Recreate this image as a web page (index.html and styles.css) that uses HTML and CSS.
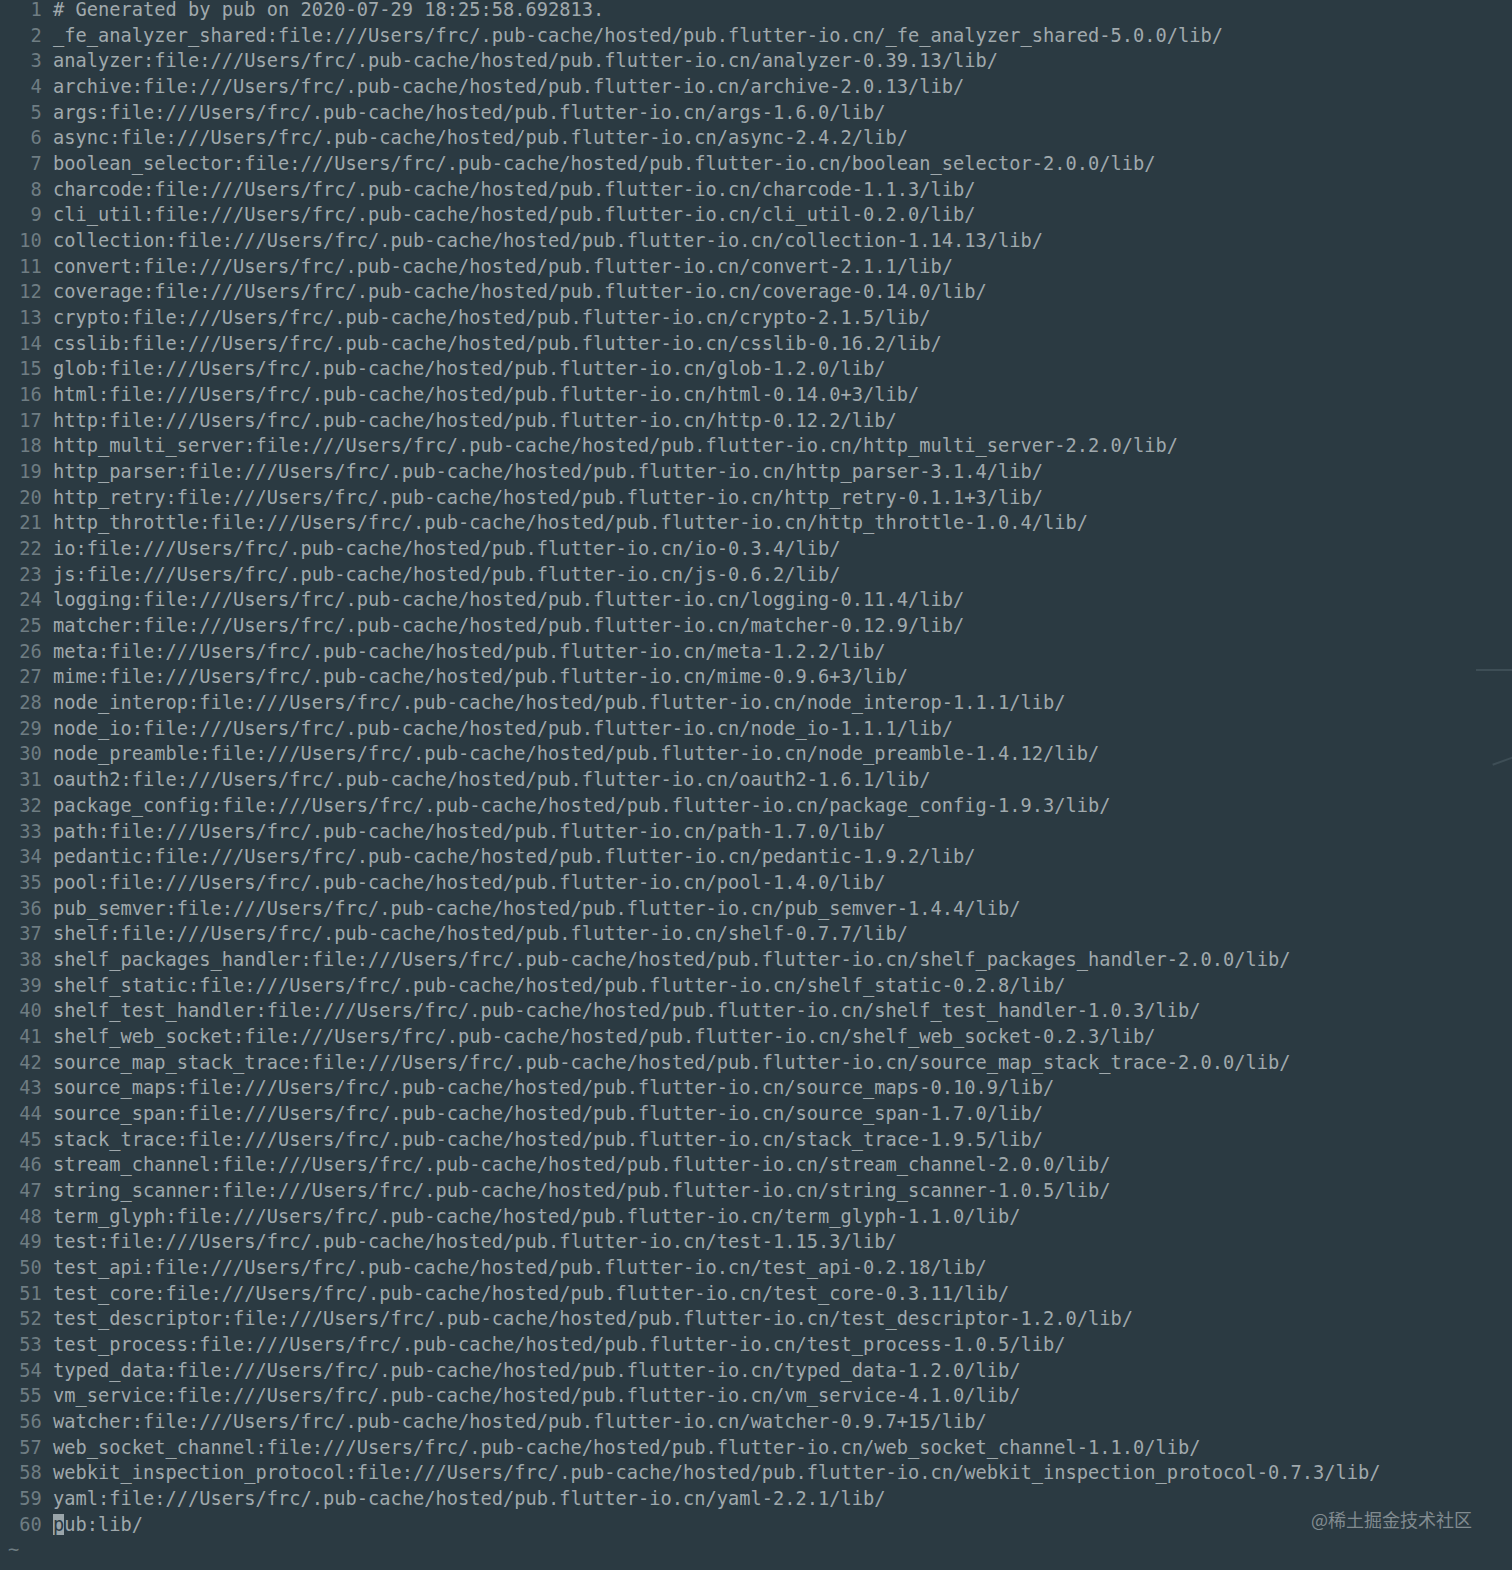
FILE: index.html
```html
<!DOCTYPE html>
<html>
<head>
<meta charset="utf-8">
<link rel="stylesheet" href="styles.css">
</head>
<body>
<div class="term">
<div class="l"><span class="n">1</span># Generated by pub on 2020-07-29 18:25:58.692813.</div>
<div class="l"><span class="n">2</span>_fe_analyzer_shared:file:///Users/frc/.pub-cache/hosted/pub.flutter-io.cn/_fe_analyzer_shared-5.0.0/lib/</div>
<div class="l"><span class="n">3</span>analyzer:file:///Users/frc/.pub-cache/hosted/pub.flutter-io.cn/analyzer-0.39.13/lib/</div>
<div class="l"><span class="n">4</span>archive:file:///Users/frc/.pub-cache/hosted/pub.flutter-io.cn/archive-2.0.13/lib/</div>
<div class="l"><span class="n">5</span>args:file:///Users/frc/.pub-cache/hosted/pub.flutter-io.cn/args-1.6.0/lib/</div>
<div class="l"><span class="n">6</span>async:file:///Users/frc/.pub-cache/hosted/pub.flutter-io.cn/async-2.4.2/lib/</div>
<div class="l"><span class="n">7</span>boolean_selector:file:///Users/frc/.pub-cache/hosted/pub.flutter-io.cn/boolean_selector-2.0.0/lib/</div>
<div class="l"><span class="n">8</span>charcode:file:///Users/frc/.pub-cache/hosted/pub.flutter-io.cn/charcode-1.1.3/lib/</div>
<div class="l"><span class="n">9</span>cli_util:file:///Users/frc/.pub-cache/hosted/pub.flutter-io.cn/cli_util-0.2.0/lib/</div>
<div class="l"><span class="n">10</span>collection:file:///Users/frc/.pub-cache/hosted/pub.flutter-io.cn/collection-1.14.13/lib/</div>
<div class="l"><span class="n">11</span>convert:file:///Users/frc/.pub-cache/hosted/pub.flutter-io.cn/convert-2.1.1/lib/</div>
<div class="l"><span class="n">12</span>coverage:file:///Users/frc/.pub-cache/hosted/pub.flutter-io.cn/coverage-0.14.0/lib/</div>
<div class="l"><span class="n">13</span>crypto:file:///Users/frc/.pub-cache/hosted/pub.flutter-io.cn/crypto-2.1.5/lib/</div>
<div class="l"><span class="n">14</span>csslib:file:///Users/frc/.pub-cache/hosted/pub.flutter-io.cn/csslib-0.16.2/lib/</div>
<div class="l"><span class="n">15</span>glob:file:///Users/frc/.pub-cache/hosted/pub.flutter-io.cn/glob-1.2.0/lib/</div>
<div class="l"><span class="n">16</span>html:file:///Users/frc/.pub-cache/hosted/pub.flutter-io.cn/html-0.14.0+3/lib/</div>
<div class="l"><span class="n">17</span>http:file:///Users/frc/.pub-cache/hosted/pub.flutter-io.cn/http-0.12.2/lib/</div>
<div class="l"><span class="n">18</span>http_multi_server:file:///Users/frc/.pub-cache/hosted/pub.flutter-io.cn/http_multi_server-2.2.0/lib/</div>
<div class="l"><span class="n">19</span>http_parser:file:///Users/frc/.pub-cache/hosted/pub.flutter-io.cn/http_parser-3.1.4/lib/</div>
<div class="l"><span class="n">20</span>http_retry:file:///Users/frc/.pub-cache/hosted/pub.flutter-io.cn/http_retry-0.1.1+3/lib/</div>
<div class="l"><span class="n">21</span>http_throttle:file:///Users/frc/.pub-cache/hosted/pub.flutter-io.cn/http_throttle-1.0.4/lib/</div>
<div class="l"><span class="n">22</span>io:file:///Users/frc/.pub-cache/hosted/pub.flutter-io.cn/io-0.3.4/lib/</div>
<div class="l"><span class="n">23</span>js:file:///Users/frc/.pub-cache/hosted/pub.flutter-io.cn/js-0.6.2/lib/</div>
<div class="l"><span class="n">24</span>logging:file:///Users/frc/.pub-cache/hosted/pub.flutter-io.cn/logging-0.11.4/lib/</div>
<div class="l"><span class="n">25</span>matcher:file:///Users/frc/.pub-cache/hosted/pub.flutter-io.cn/matcher-0.12.9/lib/</div>
<div class="l"><span class="n">26</span>meta:file:///Users/frc/.pub-cache/hosted/pub.flutter-io.cn/meta-1.2.2/lib/</div>
<div class="l"><span class="n">27</span>mime:file:///Users/frc/.pub-cache/hosted/pub.flutter-io.cn/mime-0.9.6+3/lib/</div>
<div class="l"><span class="n">28</span>node_interop:file:///Users/frc/.pub-cache/hosted/pub.flutter-io.cn/node_interop-1.1.1/lib/</div>
<div class="l"><span class="n">29</span>node_io:file:///Users/frc/.pub-cache/hosted/pub.flutter-io.cn/node_io-1.1.1/lib/</div>
<div class="l"><span class="n">30</span>node_preamble:file:///Users/frc/.pub-cache/hosted/pub.flutter-io.cn/node_preamble-1.4.12/lib/</div>
<div class="l"><span class="n">31</span>oauth2:file:///Users/frc/.pub-cache/hosted/pub.flutter-io.cn/oauth2-1.6.1/lib/</div>
<div class="l"><span class="n">32</span>package_config:file:///Users/frc/.pub-cache/hosted/pub.flutter-io.cn/package_config-1.9.3/lib/</div>
<div class="l"><span class="n">33</span>path:file:///Users/frc/.pub-cache/hosted/pub.flutter-io.cn/path-1.7.0/lib/</div>
<div class="l"><span class="n">34</span>pedantic:file:///Users/frc/.pub-cache/hosted/pub.flutter-io.cn/pedantic-1.9.2/lib/</div>
<div class="l"><span class="n">35</span>pool:file:///Users/frc/.pub-cache/hosted/pub.flutter-io.cn/pool-1.4.0/lib/</div>
<div class="l"><span class="n">36</span>pub_semver:file:///Users/frc/.pub-cache/hosted/pub.flutter-io.cn/pub_semver-1.4.4/lib/</div>
<div class="l"><span class="n">37</span>shelf:file:///Users/frc/.pub-cache/hosted/pub.flutter-io.cn/shelf-0.7.7/lib/</div>
<div class="l"><span class="n">38</span>shelf_packages_handler:file:///Users/frc/.pub-cache/hosted/pub.flutter-io.cn/shelf_packages_handler-2.0.0/lib/</div>
<div class="l"><span class="n">39</span>shelf_static:file:///Users/frc/.pub-cache/hosted/pub.flutter-io.cn/shelf_static-0.2.8/lib/</div>
<div class="l"><span class="n">40</span>shelf_test_handler:file:///Users/frc/.pub-cache/hosted/pub.flutter-io.cn/shelf_test_handler-1.0.3/lib/</div>
<div class="l"><span class="n">41</span>shelf_web_socket:file:///Users/frc/.pub-cache/hosted/pub.flutter-io.cn/shelf_web_socket-0.2.3/lib/</div>
<div class="l"><span class="n">42</span>source_map_stack_trace:file:///Users/frc/.pub-cache/hosted/pub.flutter-io.cn/source_map_stack_trace-2.0.0/lib/</div>
<div class="l"><span class="n">43</span>source_maps:file:///Users/frc/.pub-cache/hosted/pub.flutter-io.cn/source_maps-0.10.9/lib/</div>
<div class="l"><span class="n">44</span>source_span:file:///Users/frc/.pub-cache/hosted/pub.flutter-io.cn/source_span-1.7.0/lib/</div>
<div class="l"><span class="n">45</span>stack_trace:file:///Users/frc/.pub-cache/hosted/pub.flutter-io.cn/stack_trace-1.9.5/lib/</div>
<div class="l"><span class="n">46</span>stream_channel:file:///Users/frc/.pub-cache/hosted/pub.flutter-io.cn/stream_channel-2.0.0/lib/</div>
<div class="l"><span class="n">47</span>string_scanner:file:///Users/frc/.pub-cache/hosted/pub.flutter-io.cn/string_scanner-1.0.5/lib/</div>
<div class="l"><span class="n">48</span>term_glyph:file:///Users/frc/.pub-cache/hosted/pub.flutter-io.cn/term_glyph-1.1.0/lib/</div>
<div class="l"><span class="n">49</span>test:file:///Users/frc/.pub-cache/hosted/pub.flutter-io.cn/test-1.15.3/lib/</div>
<div class="l"><span class="n">50</span>test_api:file:///Users/frc/.pub-cache/hosted/pub.flutter-io.cn/test_api-0.2.18/lib/</div>
<div class="l"><span class="n">51</span>test_core:file:///Users/frc/.pub-cache/hosted/pub.flutter-io.cn/test_core-0.3.11/lib/</div>
<div class="l"><span class="n">52</span>test_descriptor:file:///Users/frc/.pub-cache/hosted/pub.flutter-io.cn/test_descriptor-1.2.0/lib/</div>
<div class="l"><span class="n">53</span>test_process:file:///Users/frc/.pub-cache/hosted/pub.flutter-io.cn/test_process-1.0.5/lib/</div>
<div class="l"><span class="n">54</span>typed_data:file:///Users/frc/.pub-cache/hosted/pub.flutter-io.cn/typed_data-1.2.0/lib/</div>
<div class="l"><span class="n">55</span>vm_service:file:///Users/frc/.pub-cache/hosted/pub.flutter-io.cn/vm_service-4.1.0/lib/</div>
<div class="l"><span class="n">56</span>watcher:file:///Users/frc/.pub-cache/hosted/pub.flutter-io.cn/watcher-0.9.7+15/lib/</div>
<div class="l"><span class="n">57</span>web_socket_channel:file:///Users/frc/.pub-cache/hosted/pub.flutter-io.cn/web_socket_channel-1.1.0/lib/</div>
<div class="l"><span class="n">58</span>webkit_inspection_protocol:file:///Users/frc/.pub-cache/hosted/pub.flutter-io.cn/webkit_inspection_protocol-0.7.3/lib/</div>
<div class="l"><span class="n">59</span>yaml:file:///Users/frc/.pub-cache/hosted/pub.flutter-io.cn/yaml-2.2.1/lib/</div>
<div class="l"><span class="n">60</span><span class="cur">p</span>ub:lib/</div>
<div class="l tilde">~</div>
</div>
<div class="mark1"></div>
<div class="mark2"></div>
<div class="wm">@稀土掘金技术社区</div>
</body>
</html>
```
FILE: styles.css
```css
html, body {
  margin: 0;
  padding: 0;
  background: #2b3a42;
  height: 100%;
}
body {
  position: relative;
  overflow: hidden;
}
.term {
  margin-top: -3px;
  padding-left: 8px;
  font-family: "DejaVu Sans Mono", "Liberation Mono", monospace;
  font-size: 18.7px;
  line-height: 25.68px;
  color: #a0a9ad;
}
.l {
  white-space: pre;
  height: 25.68px;
}
.n {
  display: inline-block;
  width: 3ch;
  margin-right: 1ch;
  text-align: right;
  color: #6f7d83;
}
.cur {
  background: #9aa5aa;
  color: #2b3a42;
}
.tilde {
  color: #6f7d83;
}
.mark1 {
  position: absolute;
  left: 1476px;
  top: 669px;
  width: 36px;
  height: 2px;
  background: #3e4e56;
}
.mark2 {
  position: absolute;
  left: 1492px;
  top: 760px;
  width: 22px;
  height: 2px;
  background: #3e4e56;
  transform: rotate(-20deg);
}
.wm {
  position: absolute;
  left: 1311px;
  top: 1507px;
  font-family: "Noto Sans CJK SC", "Noto Sans", sans-serif;
  font-size: 18px;
  line-height: 24px;
  color: #818b90;
}
```
